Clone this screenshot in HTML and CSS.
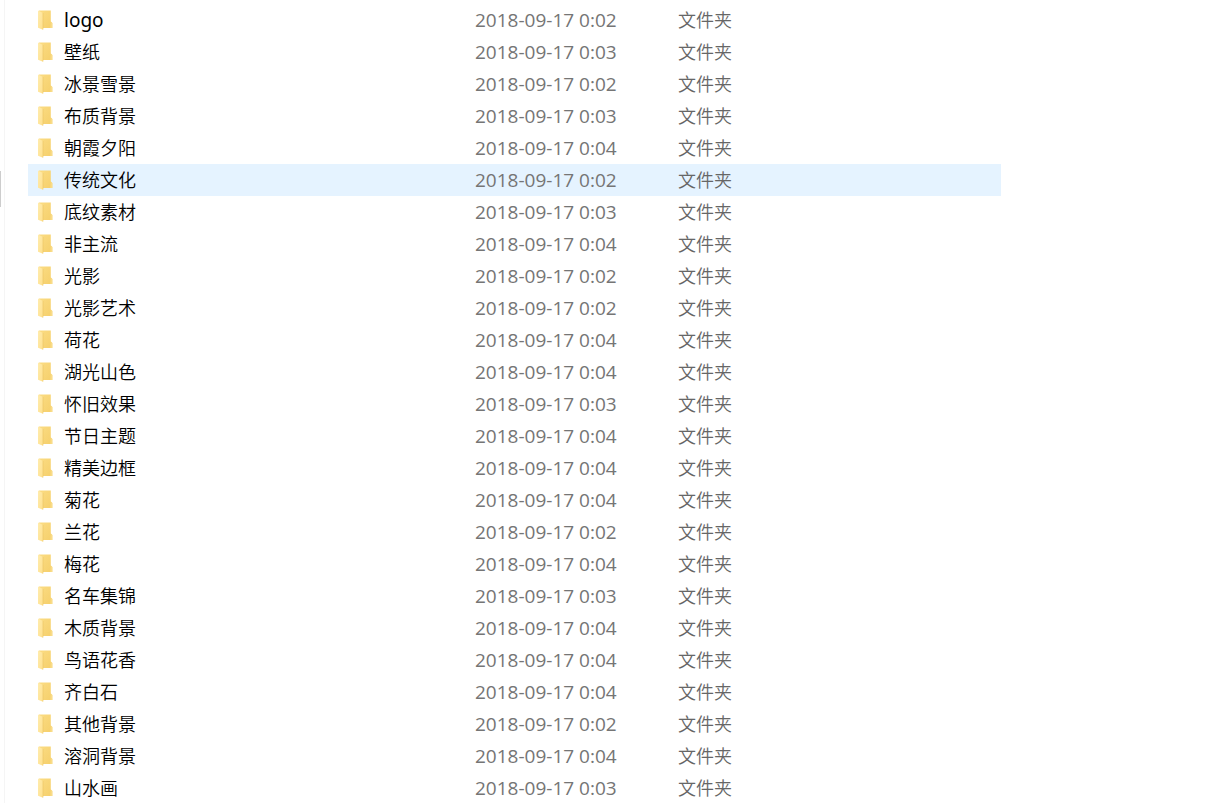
FILE: index.html
```html
<!DOCTYPE html>
<html lang="zh-CN">
<head>
<meta charset="utf-8">
<title>文件夹</title>
<link rel="stylesheet" href="styles.css">
</head>
<body>
<svg class="defs" aria-hidden="true">
  <defs>
    <linearGradient id="flap" x1="0" y1="0" x2="1" y2="1">
      <stop offset="0" stop-color="#ffecae"/>
      <stop offset="1" stop-color="#ffe08c"/>
    </linearGradient>
    <linearGradient id="back" x1="0" y1="0" x2="1" y2="1">
      <stop offset="0" stop-color="#fbdc83"/>
      <stop offset="1" stop-color="#f5cf6b"/>
    </linearGradient>
    <symbol id="folder" viewBox="0 0 15 20">
      <path d="M1 0.5H12.8V11.5L14.3 13V18H1Z" fill="url(#back)"/>
      <path d="M12.8 11.5L14.3 13V18H12.3Z" fill="#f9dc88"/>
      <path d="M0 0.5L5 3V19.8L0 17.8Z" fill="url(#flap)"/>
      <path d="M5 3V19.5" stroke="#eac362" stroke-width="0.6"/>
    </symbol>
  </defs>
</svg>
<div class="window">
  <div class="splitter"><span class="grip"></span></div>
  <main class="pane">
    <table class="files">
      <colgroup><col class="col-name"><col class="col-date"><col class="col-type"></colgroup>
      <tbody id="rows"></tbody>
    </table>
  </main>
</div>
<script src="files.js"></script>
</body>
</html>
```
FILE: styles.css
```css
body {
  margin: 0;
  background: #fff;
  color: #000;
  font-family: "Noto Sans", "Noto Sans CJK SC", sans-serif;
  font-size: 18px;
  overflow: hidden;
}

.defs {
  position: absolute;
  width: 0;
  height: 0;
}

.window {
  display: flex;
  min-height: 100vh;
}

.splitter {
  flex: none;
  box-sizing: border-box;
  width: 5px;
  padding-top: 171px;
  border-right: 1px solid #f5f5f5;
}

.grip {
  display: block;
  width: 1px;
  height: 36px;
  background: #cdcdcd;
}

.pane {
  flex: 1;
  padding: 4px 206px 0 23px;
}

.files {
  width: 100%;
  table-layout: fixed;
  border-collapse: collapse;
}

.col-name {
  width: 447px;
}

.col-date {
  width: 203px;
}

.files td {
  height: 32px;
  padding: 0;
  line-height: 32px;
  white-space: nowrap;
  color: #666;
  font-weight: 350;
}

.files .hovered {
  background: #e5f3ff;
}

.name {
  display: flex;
  align-items: center;
  gap: 11px;
  height: 32px;
  padding-left: 10px;
  color: #000;
}

.icon {
  flex: none;
  width: 15px;
  height: 20px;
}

.latin {
  font-size: 19px;
  font-weight: 400;
}

.files .date {
  color: #757575;
  font-family: "Open Sans", sans-serif;
  font-size: 19px;
  font-weight: 400;
}
```
FILE: files.js
```js
const files = [
  ["logo", 2], ["壁纸", 3], ["冰景雪景", 2], ["布质背景", 3], ["朝霞夕阳", 4],
  ["传统文化", 2], ["底纹素材", 3], ["非主流", 4], ["光影", 2], ["光影艺术", 2],
  ["荷花", 4], ["湖光山色", 4], ["怀旧效果", 3], ["节日主题", 4], ["精美边框", 4],
  ["菊花", 4], ["兰花", 2], ["梅花", 4], ["名车集锦", 3], ["木质背景", 4],
  ["鸟语花香", 4], ["齐白石", 4], ["其他背景", 2], ["溶洞背景", 4], ["山水画", 3]
];

document.getElementById("rows").innerHTML = files.map(([name, minute]) => `
  <tr${name === "传统文化" ? ' class="hovered"' : ""}>
    <td><div class="name"><svg class="icon" aria-hidden="true"><use href="#folder"/></svg><span${/^[a-z]+$/.test(name) ? ' class="latin"' : ""}>${name}</span></div></td>
    <td class="date">2018-09-17 0:0${minute}</td>
    <td>文件夹</td>
  </tr>`).join("");
```
